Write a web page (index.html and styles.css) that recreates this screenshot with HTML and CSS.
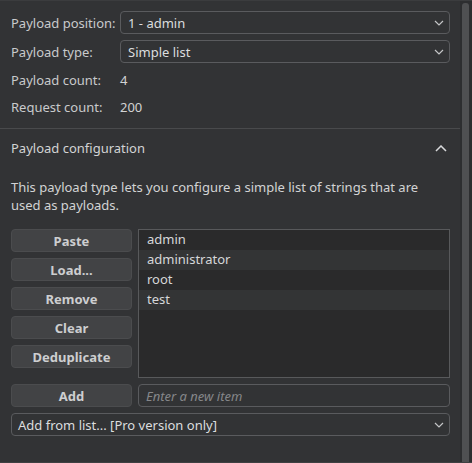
FILE: index.html
```html
<!DOCTYPE html>
<html lang="en">

<head>
    <meta charset="UTF-8">
    <meta name="viewport" content="width=device-width, initial-scale=1.0">
    <title>Payloads</title>
    <link rel="stylesheet" href="styles.css">
</head>

<body>
    <div class="panel">
        <div class="content">
            <div class="settings">
                <div class="row">
                    <span class="label">Payload position:</span>
                    <div class="combo">
                        <span>1 - admin</span>
                        <svg class="chevron" width="10" height="6" viewBox="0 0 10 6"><path d="M1 1l4 4 4-4" /></svg>
                    </div>
                </div>
                <div class="row">
                    <span class="label">Payload type:</span>
                    <div class="combo">
                        <span>Simple list</span>
                        <svg class="chevron" width="10" height="6" viewBox="0 0 10 6"><path d="M1 1l4 4 4-4" /></svg>
                    </div>
                </div>
                <div class="row text-row">
                    <span class="label">Payload count:</span>
                    <span class="value">4</span>
                </div>
                <div class="row text-row">
                    <span class="label">Request count:</span>
                    <span class="value">200</span>
                </div>
            </div>

            <div class="section">
                <div class="section-header">
                    <span>Payload configuration</span>
                    <svg class="chevron up" width="12" height="7" viewBox="0 0 12 7"><path d="M1 6l5-5 5 5" /></svg>
                </div>
                <p class="description">This payload type lets you configure a simple list of strings that are used as payloads.</p>

                <div class="editor">
                    <div class="buttons">
                        <button class="button">Paste</button>
                        <button class="button">Load...</button>
                        <button class="button">Remove</button>
                        <button class="button">Clear</button>
                        <button class="button">Deduplicate</button>
                    </div>
                    <ul class="items">
                        <li>admin</li>
                        <li>administrator</li>
                        <li>root</li>
                        <li>test</li>
                    </ul>
                </div>

                <div class="add-row">
                    <button class="button">Add</button>
                    <input class="new-item" type="text" placeholder="Enter a new item">
                </div>

                <div class="combo wide">
                    <span>Add from list... [Pro version only]</span>
                    <svg class="chevron" width="10" height="6" viewBox="0 0 10 6"><path d="M1 1l4 4 4-4" /></svg>
                </div>
            </div>
        </div>
        <div class="scrollbar">
            <div class="thumb"></div>
        </div>
    </div>
</body>

</html>
```

FILE: styles.css
```css
html, body {
    margin: 0;
    padding: 0;
    height: 100%;
    background-color: #323335;
    font-family: "Noto Sans", "Open Sans", Arial, sans-serif;
    font-size: 13px;
    color: #d2d3d4;
}

.panel {
    display: flex;
    height: 463px;
    box-sizing: border-box;
    border-top: 1px solid #3b3c3e;
    border-bottom: 1px solid #3f4042;
}

.content {
    flex: 1;
    min-width: 0;
}

.settings {
    padding: 10px 10px 11px 11px;
    border-bottom: 1px solid #494a4c;
}

.row {
    display: grid;
    grid-template-columns: 109px 1fr;
    align-items: center;
    height: 23px;
    margin-bottom: 6px;
}

.row.text-row {
    height: 21px;
}

.row:last-child {
    margin-bottom: 0;
}

.label {
    color: #c9cacc;
}

.value {
    color: #d2d3d4;
}

.combo {
    display: flex;
    align-items: center;
    justify-content: space-between;
    height: 23px;
    box-sizing: border-box;
    padding: 0 5px 0 7px;
    border: 1px solid #5a5b5e;
    border-radius: 4px;
    color: #dcdddf;
}

.combo.wide {
    margin-top: 6px;
    padding-left: 6px;
}

.chevron path {
    fill: none;
    stroke: #c4c5c7;
    stroke-width: 1.2;
}

.section {
    padding: 0 10px 0 11px;
}

.section-header {
    display: flex;
    align-items: center;
    justify-content: space-between;
    height: 38px;
    padding-right: 3px;
    color: #d2d3d4;
}

.chevron.up path {
    stroke: #d8d9db;
    stroke-width: 1.5;
}

.description {
    margin: 11px 0 15px;
    line-height: 18px;
    color: #d2d3d4;
}

.editor {
    display: flex;
    gap: 6px;
}

.buttons {
    display: flex;
    flex-direction: column;
    gap: 6px;
    width: 121px;
    flex-shrink: 0;
}

.button {
    height: 23px;
    width: 121px;
    padding: 0;
    font-family: inherit;
    font-size: 13px;
    font-weight: bold;
    color: #cdced0;
    background-color: #424345;
    border: 1px solid #4b4c4e;
    border-radius: 4px;
    cursor: pointer;
}

.button:hover {
    background-color: #4a4b4d;
}

.items {
    flex: 1;
    height: 149px;
    box-sizing: border-box;
    margin: 0;
    padding: 0;
    list-style: none;
    background-color: #2a2a2b;
    border: 1px solid #58595b;
}

.items li {
    height: 20px;
    line-height: 19px;
    padding-left: 8px;
    color: #d6d7d9;
}

.items li:nth-child(even) {
    background-color: #333435;
}

.add-row {
    display: flex;
    gap: 6px;
    margin-top: 6px;
}

.new-item {
    flex: 1;
    min-width: 0;
    height: 23px;
    box-sizing: border-box;
    padding: 0 7px;
    font-family: inherit;
    font-size: 13px;
    color: #d2d3d4;
    background-color: transparent;
    border: 1px solid #5a5b5e;
    border-radius: 4px;
    outline: none;
}

.new-item::placeholder {
    color: #86878a;
    font-style: italic;
}

.scrollbar {
    width: 12px;
    flex-shrink: 0;
    padding: 2px 3px 0 2px;
    box-sizing: border-box;
    background-color: #2d2e30;
}

.thumb {
    height: 100%;
    background-color: #4f5052;
    border-radius: 3px 3px 0 0;
}
```
